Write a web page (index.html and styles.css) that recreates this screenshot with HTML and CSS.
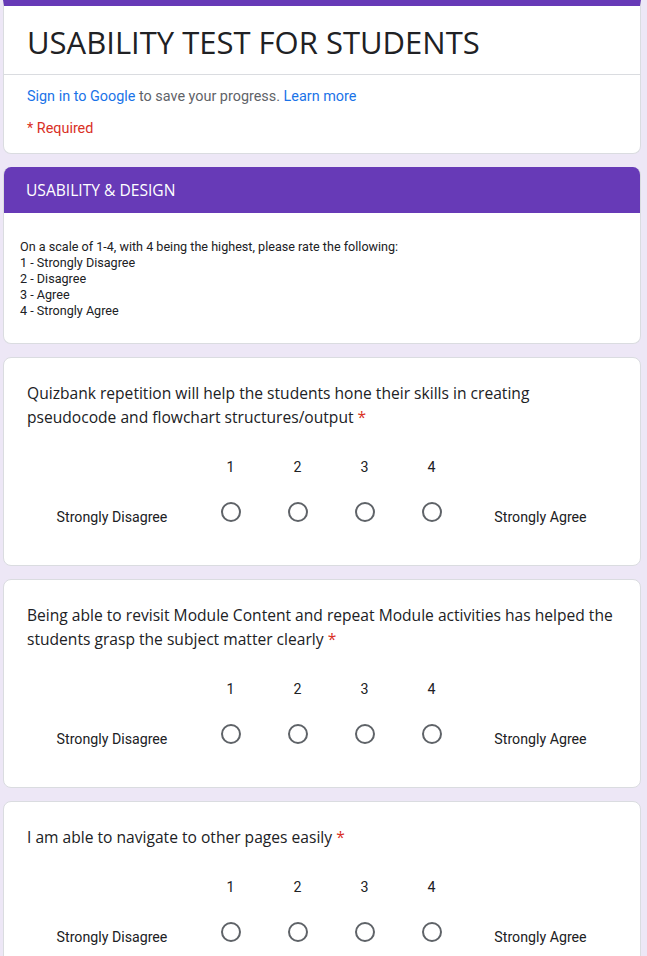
FILE: index.html
```html
<!DOCTYPE html>
<html>
<head>
<meta charset="utf-8">
<link rel="stylesheet" href="styles.css">
</head>
<body>
<div class="page">
  <div class="card header-card">
    <h1 class="form-title">USABILITY TEST FOR STUDENTS</h1>
    <div class="divider"></div>
    <div class="header-info">
      <div class="signin"><a class="link">Sign in to Google</a> to save your progress. <a class="link">Learn more</a></div>
      <div class="required">* Required</div>
    </div>
  </div>

  <div class="card section-card">
    <div class="section-head">USABILITY &amp; DESIGN</div>
    <div class="section-desc">On a scale of 1-4, with 4 being the highest, please rate the following:<br>1 - Strongly Disagree<br>2 - Disagree<br>3 - Agree<br>4 - Strongly Agree</div>
  </div>

  <div class="card q-card">
    <div class="q-title">Quizbank repetition will help the students hone their skills in creating pseudocode and flowchart structures/output <span class="star">*</span></div>
    <div class="scale">
      <div></div><div class="num">1</div><div class="num">2</div><div class="num">3</div><div class="num">4</div><div></div>
      <div class="lbl">Strongly Disagree</div>
      <div class="rad"><span class="radio"></span></div><div class="rad"><span class="radio"></span></div><div class="rad"><span class="radio"></span></div><div class="rad"><span class="radio"></span></div>
      <div class="lbl">Strongly Agree</div>
    </div>
  </div>

  <div class="card q-card">
    <div class="q-title">Being able to revisit Module Content and repeat Module activities has helped the students grasp the subject matter clearly <span class="star">*</span></div>
    <div class="scale">
      <div></div><div class="num">1</div><div class="num">2</div><div class="num">3</div><div class="num">4</div><div></div>
      <div class="lbl">Strongly Disagree</div>
      <div class="rad"><span class="radio"></span></div><div class="rad"><span class="radio"></span></div><div class="rad"><span class="radio"></span></div><div class="rad"><span class="radio"></span></div>
      <div class="lbl">Strongly Agree</div>
    </div>
  </div>

  <div class="card q-card">
    <div class="q-title">I am able to navigate to other pages easily <span class="star">*</span></div>
    <div class="scale">
      <div></div><div class="num">1</div><div class="num">2</div><div class="num">3</div><div class="num">4</div><div></div>
      <div class="lbl">Strongly Disagree</div>
      <div class="rad"><span class="radio"></span></div><div class="rad"><span class="radio"></span></div><div class="rad"><span class="radio"></span></div><div class="rad"><span class="radio"></span></div>
      <div class="lbl">Strongly Agree</div>
    </div>
  </div>
</div>
</body>
</html>
```

FILE: styles.css
```css
html, body {
  margin: 0;
  padding: 0;
  background: #ede7f6;
  font-family: Roboto, "Liberation Sans", sans-serif;
  color: #202124;
}
.page {
  margin-left: 3px;
  width: 638px;
  display: flex;
  flex-direction: column;
  gap: 13px;
  padding-bottom: 20px;
}
.card {
  background: #fff;
  border: 1px solid #dadce0;
  border-radius: 8px;
  overflow: hidden;
}
.header-card {
  border-top: 6px solid #673ab7;
  border-top-left-radius: 0;
  border-top-right-radius: 0;
}
.form-title {
  margin: 0;
  padding: 16px 24px 12px 23px;
  font-family: "Open Sans", sans-serif;
  font-weight: 400;
  font-size: 31px;
  line-height: 40px;
  color: #202124;
}
.divider {
  height: 1px;
  background: #dadce0;
}
.header-info {
  padding: 12px 24px 14px 23px;
  font-size: 14.4px;
  line-height: 20px;
}
.signin { color: #5f6368; }
.link { color: #1a73e8; text-decoration: none; }
.required {
  margin-top: 12px;
  color: #d93025;
}
.section-card {
  border-top: 0;
}
.section-head {
  background: #673ab7;
  color: #fff;
  height: 46px;
  padding-left: 22px;
  display: flex;
  align-items: center;
  font-family: "Open Sans", sans-serif;
  font-size: 15.6px;
}
.section-desc {
  padding: 26px 24px 24px 16px;
  font-size: 12.6px;
  line-height: 16px;
  color: #202124;
}
.q-card {
  padding: 23px 18px 29px 23px;
}
.q-title {
  font-family: "Open Sans", sans-serif;
  font-size: 15.6px;
  line-height: 24px;
  color: #202124;
}
.star { color: #d93025; }
.scale {
  margin-top: 28px;
  margin-right: 6px;
  display: grid;
  grid-template-columns: 170px repeat(4, 67px) 1fr;
  grid-template-rows: 20px 48px;
  row-gap: 11px;
  font-size: 14.2px;
  color: #202124;
}
.num {
  text-align: center;
  line-height: 20px;
}
.rad {
  display: flex;
  align-items: center;
  justify-content: center;
}
.radio {
  width: 20px;
  height: 20px;
  box-sizing: border-box;
  border: 2px solid #5f6368;
  border-radius: 50%;
}
.lbl {
  text-align: center;
  line-height: 20px;
  padding-top: 19px;
}
```
